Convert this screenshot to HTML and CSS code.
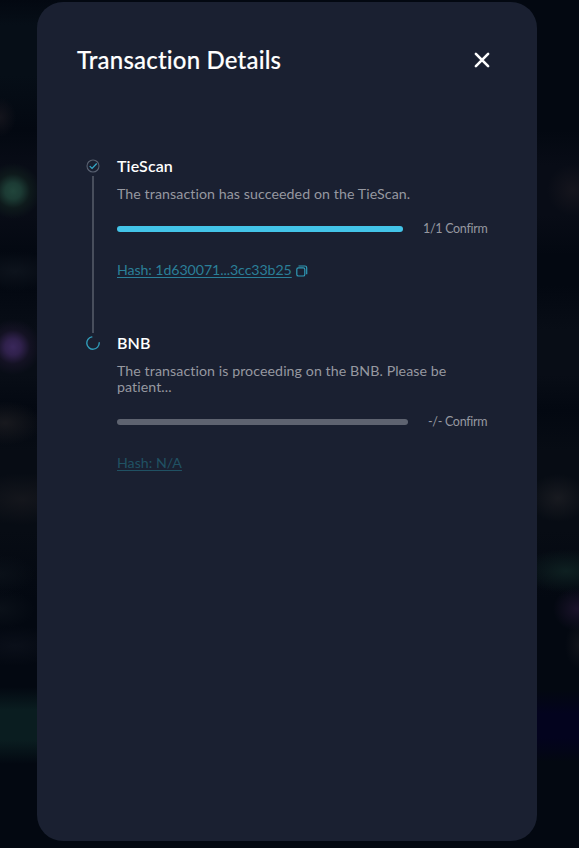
FILE: index.html
```html
<!DOCTYPE html>
<html lang="en">
<head>
<meta charset="utf-8">
<title>Transaction Details</title>
<link rel="stylesheet" href="styles.css">
</head>
<body>
<div class="backdrop"></div>
<main class="modal">
  <header class="modal-header">
    <h1>Transaction Details</h1>
    <svg class="close" viewBox="0 0 16 16" width="16" height="16" fill="none" stroke="#fff" stroke-width="2.6" stroke-linecap="round"><path d="M1.9 1.9 14.1 14.1M14.1 1.9 1.9 14.1"/></svg>
  </header>
  <section class="step">
    <div class="rail">
      <svg width="14" height="14" viewBox="0 0 14 14" fill="none"><circle cx="7" cy="7" r="6" stroke="#596171" stroke-width="1.1"/><path d="M3.7 7.1 6.1 9.4 10.7 4.5" stroke="#35a8c8" stroke-width="1.3"/></svg>
      <div class="line"></div>
    </div>
    <div class="content">
      <h2>TieScan</h2>
      <p>The transaction has succeeded on the TieScan.</p>
      <div class="progress"><div class="bar done"></div><span class="confirm">1/1 Confirm</span></div>
      <div class="hash"><a class="link">Hash: 1d630071...3cc33b25</a>
        <svg width="12" height="12" viewBox="0 0 12 12" fill="none" stroke="#2f9ab7" stroke-width="1.2"><rect x=".8" y="2.8" width="8" height="8.2" rx="1.6"/><path d="M2.5 1H9Q10.7 1 10.7 2.7V9.3"/></svg>
      </div>
    </div>
  </section>
  <section class="step">
    <div class="rail">
      <svg width="14" height="14" viewBox="0 0 14 14" fill="none" stroke="#309bb8" stroke-width="1.4" stroke-linecap="round"><path d="M5.8.9A6.2 6.2 0 1 0 13.2 6.8"/></svg>
    </div>
    <div class="content">
      <h2>BNB</h2>
      <p>The transaction is proceeding on the BNB. Please be<br>patient...</p>
      <div class="progress"><div class="bar"></div><span class="confirm pending">-/- Confirm</span></div>
      <div class="hash"><a class="link disabled">Hash: N/A</a></div>
    </div>
  </section>
</main>
</body>
</html>
```
FILE: styles.css
```css
* { box-sizing: border-box; }
html, body { margin: 0; height: 100%; overflow: hidden; }
body {
  background: #030811;
  font-family: Lato, "Liberation Sans", sans-serif;
  font-variant-ligatures: none;
  padding: 2px 42px 7px 37px;
}
.backdrop {
  position: absolute;
  inset: 0;
  z-index: -1;
  background:
    radial-gradient(circle at 13px 191px, #21453b 0, #1c3b34 8px, #12231f99 17px, transparent 28px),
    radial-gradient(circle at 13px 347px, #3a285b 0, #30214c 8px, #1b152b99 17px, transparent 28px),
    radial-gradient(ellipse 16px 20px at 0 117px, #14141c, transparent),
    radial-gradient(ellipse 45px 20px at 15px 271px, #0d131c, transparent),
    radial-gradient(ellipse 38px 22px at 5px 423px, #18191e, transparent),
    radial-gradient(ellipse 55px 26px at 22px 499px, #14161c, transparent),
    radial-gradient(ellipse 35px 20px at 0 574px, #0a1018, transparent),
    radial-gradient(ellipse 35px 20px at 0 609px, #0a1018, transparent),
    radial-gradient(ellipse 50px 20px at 15px 646px, #0a0f19, transparent),
    radial-gradient(ellipse 26px 26px at 573px 190px, #15151d, transparent),
    radial-gradient(ellipse 30px 24px at 558px 498px, #181a20, transparent),
    radial-gradient(ellipse 46px 22px at 566px 571px, #0e2021, transparent),
    radial-gradient(ellipse 24px 22px at 577px 609px, #1a132a, transparent),
    radial-gradient(ellipse 14px 24px at 579px 645px, #10131a, transparent),
    linear-gradient(transparent 687px, #0a1d20 710px, #0a1d20 740px, transparent 764px) 0 0 / 60px 100% no-repeat,
    linear-gradient(transparent 690px, #03031e 714px, #03031e 738px, transparent 762px) 100% 0 / 60px 100% no-repeat,
    linear-gradient(transparent 0, #060e17 25px, #060e17 75px, transparent 130px) 0 0 / 60px 100% no-repeat,
    linear-gradient(transparent 130px, #080c16 165px, #080c16 215px, transparent 255px, transparent 285px, #080d16 330px, #080d16 375px, transparent 410px, #070c14 450px, #070c14 530px, transparent 600px);
}
.modal {
  height: 839px;
  margin-left: .4px;
  padding: 41px 40px 0 39.6px;
  border-radius: 26px;
  background: #1a2031;
}
.modal-header {
  display: flex;
  align-items: center;
  justify-content: space-between;
  height: 34px;
  padding-right: 7px;
}
h1, h2, p { margin: 0; }
h1 {
  color: #fff;
  font-size: 24px;
  line-height: 34px;
  font-weight: 500;
  letter-spacing: .19px;
  -webkit-text-stroke: .15px #fff;
}
h1, h2, p, .confirm, .link { white-space: nowrap; }
.close { display: block; }
.step { display: flex; height: 177px; padding-left: 9px; }
.modal-header + .step { margin-top: 80px; }
.rail {
  width: 14px;
  margin-right: 17px;
  padding-top: 2px;
  display: flex;
  flex-direction: column;
  align-items: center;
}
.rail svg { display: block; flex: none; }
.line { width: 1.4px; height: 157px; margin-top: 3px; background: #484e5c; }
.content { flex: 1; min-width: 0; padding-right: 10px; }
h2 { color: #fff; font-size: 16px; line-height: 18px; padding-bottom: 2px; font-weight: 600; letter-spacing: .12px; }
p { margin-top: 9px; color: #9698a0; font-size: 14.2px; line-height: 16px; letter-spacing: .08px; }
.progress { display: flex; align-items: center; height: 18px; margin-top: 18px; }
.bar { flex: 1; height: 6px; border-radius: 3px; background: #5e6370; }
.done { background: #43c4e8; }
.confirm {
  width: 64px;
  margin-left: 20px;
  color: #9698a0;
  font-size: 12.5px;
  line-height: 18px;
  letter-spacing: -.3px;
}
.pending { width: 59px; }
.hash { display: flex; align-items: center; height: 20px; margin-top: 22px; gap: 4px; }
.link {
  color: #2b7f98;
  font-size: 14.2px;
  line-height: 20px;
  letter-spacing: -.09px;
  text-decoration: underline;
  text-decoration-thickness: 1px;
  text-underline-offset: 2px;
  text-decoration-skip-ink: none;
}
.hash svg { margin-top: 1px; }
.disabled { color: #205163; letter-spacing: 0; }
```
